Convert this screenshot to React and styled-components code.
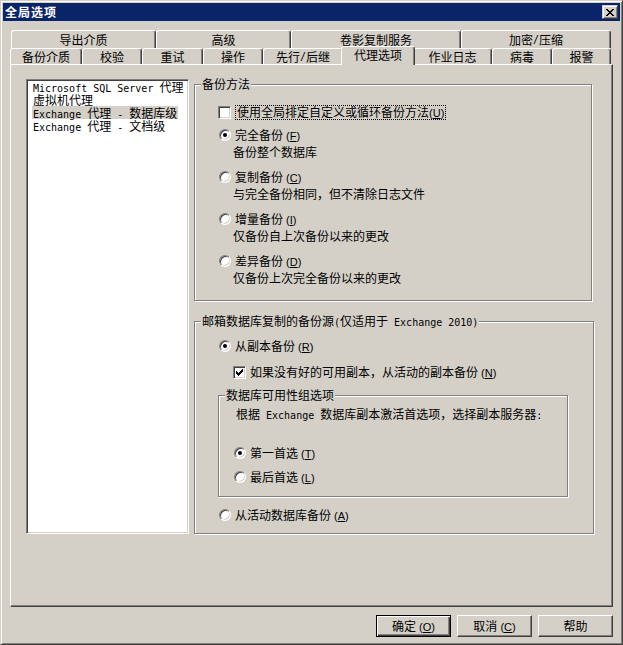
import React from 'react';
import styled, { createGlobalStyle, css } from 'styled-components';

const GlobalStyle = createGlobalStyle`
  html, body {
    margin: 0;
    padding: 0;
    background: #d4d0c8;
  }
  body {
    font-family: "Noto Sans CJK SC", sans-serif;
    font-size: 12px;
    line-height: 16px;
    color: #000;
  }
`;

/* classic win2k 3d edges */
const sunken = css`
  border: 1px solid;
  border-color: #808080 #fff #fff #808080;
  box-shadow: inset 1px 1px #404040, inset -1px -1px #d4d0c8;
`;

const Window = styled.div`
  width: 623px;
  height: 645px;
  box-sizing: border-box;
  background: #d4d0c8;
  border: 1px solid;
  border-color: #d4d0c8 #404040 #404040 #d4d0c8;
  box-shadow: inset 1px 1px #fff, inset -1px -1px #808080;
  padding: 2px;
  display: flex;
  flex-direction: column;
`;

const TitleBar = styled.div`
  height: 18px;
  background: #0a246a;
  display: flex;
  align-items: center;
  justify-content: space-between;
  padding: 0 2px;
`;

const TitleText = styled.span`
  color: #fff;
  font-weight: bold;
  font-size: 12px;
  letter-spacing: 1px;
  line-height: 18px;
`;

const CaptionButton = styled.div`
  width: 16px;
  height: 14px;
  box-sizing: border-box;
  background: #d4d0c8;
  border: 1px solid;
  border-color: #d4d0c8 #404040 #404040 #d4d0c8;
  box-shadow: inset 1px 1px #fff, inset -1px -1px #808080;
  display: flex;
  align-items: center;
  justify-content: center;
`;

const Glyph = styled.svg`
  display: block;
`;

const DialogBody = styled.div`
  padding: 9px 7px 0;
  display: flex;
  flex-direction: column;
`;

const TabRow = styled.div`
  display: flex;
  align-items: flex-end;
  height: ${({ $h }) => $h}px;
  margin-left: ${({ $indent }) => $indent || 0}px;
`;

const Tab = styled.div`
  width: ${({ $w }) => $w}px;
  height: 100%;
  box-sizing: border-box;
  flex-shrink: 0;
  background: #d4d0c8;
  border-top: 1px solid #fff;
  border-left: 1px solid #fff;
  border-right: 1px solid #404040;
  box-shadow: inset -1px 0 #808080;
  border-radius: 3px 3px 0 0;
  display: flex;
  align-items: center;
  justify-content: center;
  white-space: nowrap;

  ${({ $active, $w }) =>
    $active &&
    css`
      position: relative;
      z-index: 1;
      width: ${$w + 4}px;
      height: 19px;
      margin: 0 -2px -1px;
      padding-bottom: 3px;
    `}
`;

const Page = styled.div`
  height: 543px;
  box-sizing: border-box;
  border: 1px solid;
  border-color: #fff #404040 #404040 #fff;
  box-shadow: inset -1px -1px #808080;
  padding: 14px 0 0 15px;
  display: flex;
  align-items: flex-start;
  gap: 5px;
`;

const ListBox = styled.div`
  width: 163px;
  height: 455px;
  box-sizing: border-box;
  background: #fff;
  ${sunken};
  padding: 0 0 0 5px;
`;

const ListItem = styled.div`
  width: fit-content;
  height: 13px;
  line-height: 13px;
  padding: 0 1px;
  white-space: nowrap;
  background: ${({ $selected }) => ($selected ? '#d4d0c8' : 'transparent')};
`;

const RightColumn = styled.div`
  width: 400px;
  margin-top: 5px;
  display: flex;
  flex-direction: column;
  gap: 20px;
`;

const GroupBox = styled.div`
  position: relative;
  width: ${({ $w }) => $w}px;
  box-sizing: border-box;
  border: 1px solid #808080;
  box-shadow: inset 1px 1px #fff, 1px 1px #fff;
  padding: ${({ $pad }) => $pad};
  margin-top: ${({ $mt }) => $mt || 0}px;
  display: flex;
  flex-direction: column;
  align-items: flex-start;
`;

const GroupLabel = styled.span`
  position: absolute;
  top: -9px;
  left: 6px;
  padding: 0 1px;
  background: #d4d0c8;
  line-height: 16px;
  white-space: nowrap;
`;

const Row = styled.div`
  display: flex;
  align-items: center;
  height: 16px;
  white-space: nowrap;
  margin-top: ${({ $mt }) => $mt || 0}px;
  margin-left: ${({ $ml }) => $ml || 0}px;
`;

const Desc = styled.div`
  height: 16px;
  line-height: 16px;
  margin: 1px 0 0 15px;
  white-space: nowrap;
`;

const CheckBox = styled.span`
  width: 13px;
  height: 13px;
  box-sizing: border-box;
  flex-shrink: 0;
  background: #fff;
  ${sunken};
  display: flex;
  align-items: center;
  justify-content: center;
`;

const RadioCell = styled.span`
  width: 13px;
  height: 12px;
  flex-shrink: 0;
  display: flex;
  justify-content: flex-end;
`;

const RadioCircle = styled.span`
  width: 12px;
  height: 12px;
  box-sizing: border-box;
  border-radius: 50%;
  background: #fff;
  ${sunken};
  display: flex;
  align-items: center;
  justify-content: center;

  &::after {
    content: '';
    display: ${({ $checked }) => ($checked ? 'block' : 'none')};
    width: 4px;
    height: 4px;
    border-radius: 50%;
    background: #000;
  }
`;

const OptionLabel = styled.span`
  margin-left: 4px;
  line-height: 11px;
  ${({ $focus }) =>
    $focus &&
    css`
      border: 1px dotted #000;
      padding: 0 1px;
    `}
`;

const PlainText = styled.span`
  margin-left: ${({ $ml }) => $ml || 0}px;
`;

const ButtonRow = styled.div`
  display: flex;
  justify-content: flex-end;
  gap: 6px;
  margin-top: 8px;
`;

const Button = styled.button`
  width: 75px;
  height: 22px;
  box-sizing: border-box;
  margin: 0;
  padding: 0;
  font: inherit;
  color: #000;
  background: #d4d0c8;
  border: 1px solid;
  border-color: #fff #404040 #404040 #fff;
  box-shadow: inset -1px -1px #808080, inset 1px 1px #d4d0c8;
  white-space: nowrap;

  ${({ $default }) =>
    $default &&
    css`
      border-color: #000;
      box-shadow: inset 1px 1px #fff, inset -1px -1px #404040, inset -2px -2px #808080;
    `}
`;

const Latin = styled.span`
  font-family: "DejaVu Sans Mono", monospace;
  font-size: 10px;
  white-space: pre;
`;

const Mnemonic = styled.span`
  font-family: "Liberation Sans", sans-serif;
  font-size: 11px;
  white-space: pre;
`;

// splits a label into CJK text, half-width ascii and "(&X)" access keys
const Txt = ({ text }) => {
  const out = [];
  let last = 0;
  for (const m of text.matchAll(/( ?)\(&(.)\)|[\x20-\x7e]+/g)) {
    if (m.index > last) out.push(text.slice(last, m.index));
    if (m[2]) {
      out.push(
        <Mnemonic key={m.index}>
          {m[1]}(<u>{m[2]}</u>)
        </Mnemonic>
      );
    } else {
      out.push(<Latin key={m.index}>{m[0]}</Latin>);
    }
    last = m.index + m[0].length;
  }
  if (last < text.length) out.push(text.slice(last));
  return out;
};

const PixelGlyph = ({ rows }) => (
  <Glyph width={rows[0].length} height={rows.length} shapeRendering="crispEdges">
    {rows.flatMap((r, y) =>
      [...r].map((c, x) =>
        c === '#' ? <rect key={`${x}-${y}`} x={x} y={y} width="1" height="1" fill="#000" /> : null
      )
    )}
  </Glyph>
);

const CLOSE_GLYPH = [
  '##....##',
  '.##..##.',
  '..####..',
  '...##...',
  '..####..',
  '.##..##.',
  '##....##',
];

const CHECK_GLYPH = [
  '......#',
  '.....##',
  '#...###',
  '##.###.',
  '#####..',
  '.###...',
  '..#....',
];

const backTabs = [
  { label: '导出介质', w: 145 },
  { label: '高级', w: 135 },
  { label: '卷影复制服务', w: 170 },
  { label: '加密/压缩', w: 150 },
];

const frontTabs = [
  { label: '备份介质', w: 72 },
  { label: '校验', w: 60 },
  { label: '重试', w: 61 },
  { label: '操作', w: 60 },
  { label: '先行/后继', w: 80 },
  { label: '代理选项', w: 70, active: true },
  { label: '作业日志', w: 79 },
  { label: '病毒', w: 60 },
  { label: '报警', w: 59 },
];

const agents = [
  'Microsoft SQL Server 代理',
  '虚拟机代理',
  'Exchange 代理 - 数据库级',
  'Exchange 代理 - 文档级',
];

const methods = [
  { label: '完全备份 (&F)', desc: '备份整个数据库', checked: true },
  { label: '复制备份 (&C)', desc: '与完全备份相同，但不清除日志文件' },
  { label: '增量备份 (&I)', desc: '仅备份自上次备份以来的更改' },
  { label: '差异备份 (&D)', desc: '仅备份上次完全备份以来的更改' },
];

const Radio = ({ label, checked, mt, ml }) => (
  <Row $mt={mt} $ml={ml}>
    <RadioCell>
      <RadioCircle $checked={checked} />
    </RadioCell>
    <OptionLabel>
      <Txt text={label} />
    </OptionLabel>
  </Row>
);

const Check = ({ label, checked, focus, mt, ml }) => (
  <Row $mt={mt} $ml={ml}>
    <CheckBox>{checked && <PixelGlyph rows={CHECK_GLYPH} />}</CheckBox>
    <OptionLabel $focus={focus}>
      <Txt text={label} />
    </OptionLabel>
  </Row>
);

export default function App() {
  return (
    <>
      <GlobalStyle />
      <Window>
        <TitleBar>
          <TitleText>全局选项</TitleText>
          <CaptionButton>
            <PixelGlyph rows={CLOSE_GLYPH} />
          </CaptionButton>
        </TitleBar>

        <DialogBody>
          <TabRow $h={18} $indent={1}>
            {backTabs.map((t) => (
              <Tab key={t.label} $w={t.w}>
                <Txt text={t.label} />
              </Tab>
            ))}
          </TabRow>
          <TabRow $h={16}>
            {frontTabs.map((t) => (
              <Tab key={t.label} $w={t.w} $active={t.active}>
                <Txt text={t.label} />
              </Tab>
            ))}
          </TabRow>

          <Page>
            <ListBox>
              {agents.map((a, i) => (
                <ListItem key={a} $selected={i === 2}>
                  <Txt text={a} />
                </ListItem>
              ))}
            </ListBox>

            <RightColumn>
              <GroupBox $w={398} $pad="19px 0 14px 23px">
                <GroupLabel>备份方法</GroupLabel>
                <Check label="使用全局排定自定义或循环备份方法(&U)" focus />
                {methods.map((m, i) => (
                  <React.Fragment key={m.label}>
                    <Radio label={m.label} checked={m.checked} mt={i === 0 ? 7 : 9} />
                    <Desc>{m.desc}</Desc>
                  </React.Fragment>
                ))}
              </GroupBox>

              <GroupBox $w={400} $pad="16px 0 10px 23px">
                <GroupLabel>
                  <Txt text="邮箱数据库复制的备份源(仅适用于 Exchange 2010)" />
                </GroupLabel>
                <Radio label="从副本备份 (&R)" checked />
                <Check label="如果没有好的可用副本，从活动的副本备份 (&N)" checked mt={10} ml={15} />

                <GroupBox $w={350} $mt={15} $pad="11px 0 11px 14px">
                  <GroupLabel>数据库可用性组选项</GroupLabel>
                  <Row>
                    <PlainText $ml={3}>
                      <Txt text="根据 Exchange 数据库副本激活首选项，选择副本服务器:" />
                    </PlainText>
                  </Row>
                  <Radio label="第一首选 (&T)" checked mt={22} />
                  <Radio label="最后首选 (&L)" mt={8} />
                </GroupBox>

                <Radio label="从活动数据库备份 (&A)" mt={10} />
              </GroupBox>
            </RightColumn>
          </Page>

          <ButtonRow>
            <Button $default>
              <Txt text="确定 (&O)" />
            </Button>
            <Button>
              <Txt text="取消 (&C)" />
            </Button>
            <Button>帮助</Button>
          </ButtonRow>
        </DialogBody>
      </Window>
    </>
  );
}
